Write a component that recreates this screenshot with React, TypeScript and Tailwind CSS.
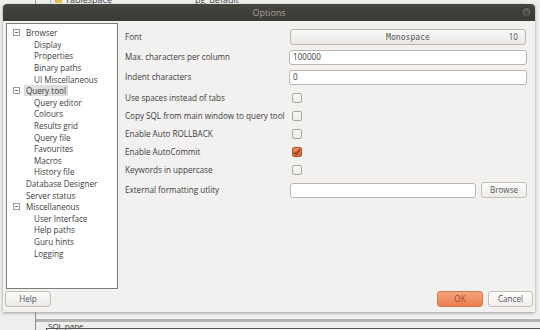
import React from "react";

// Tree data for the left panel
interface TreeItem {
  label: string;
  level: number;
  expanded?: boolean;
  selected?: boolean;
}

const treeItems: TreeItem[] = [
  { label: "Browser", level: 0, expanded: true },
  { label: "Display", level: 1 },
  { label: "Properties", level: 1 },
  { label: "Binary paths", level: 1 },
  { label: "UI Miscellaneous", level: 1 },
  { label: "Query tool", level: 0, expanded: true, selected: true },
  { label: "Query editor", level: 1 },
  { label: "Colours", level: 1 },
  { label: "Results grid", level: 1 },
  { label: "Query file", level: 1 },
  { label: "Favourites", level: 1 },
  { label: "Macros", level: 1 },
  { label: "History file", level: 1 },
  { label: "Database Designer", level: 0 },
  { label: "Server status", level: 0 },
  { label: "Miscellaneous", level: 0, expanded: true },
  { label: "User Interface", level: 1 },
  { label: "Help paths", level: 1 },
  { label: "Guru hints", level: 1 },
  { label: "Logging", level: 1 },
];

const checkRows: { label: string; checked: boolean }[] = [
  { label: "Use spaces instead of tabs", checked: false },
  { label: "Copy SQL from main window to query tool", checked: false },
  { label: "Enable Auto ROLLBACK", checked: false },
  { label: "Enable AutoCommit", checked: true },
  { label: "Keywords in uppercase", checked: false },
];

const Expander: React.FC = () => (
  <svg width="7" height="7" viewBox="0 0 7 7" className="block">
    <rect x="0.5" y="0.5" width="6" height="6" fill="none" stroke="#9a9a9a" />
    <line x1="2" y1="3.5" x2="5" y2="3.5" stroke="#6a6a6a" />
  </svg>
);

const CheckBox: React.FC<{ checked: boolean }> = ({ checked }) =>
  checked ? (
    <div className="w-[10px] h-[10px] rounded-[2px] border border-[#b5542a] bg-gradient-to-b from-[#ec8a5c] to-[#d3653a] flex items-center justify-center">
      <svg width="8" height="8" viewBox="0 0 8 8">
        <path d="M1.2 4.2 L3.2 6.2 L7 1.3" fill="none" stroke="#8c3614" strokeWidth="1.4" />
      </svg>
    </div>
  ) : (
    <div className="w-[10px] h-[10px] rounded-[2px] border border-[#aaa7a1] bg-gradient-to-b from-[#f7f7f6] to-[#ecebe9]" />
  );

const TreeRow: React.FC<{ item: TreeItem }> = ({ item }) => (
  <div className={`flex items-center h-[11.6px] ${item.level === 1 ? "pl-[14px]" : "pl-[6px]"}`}>
    <div className="w-[13px] flex items-center">{item.level === 0 && item.expanded && <Expander />}</div>
    <span
      className={`leading-[11px] whitespace-nowrap ${
        item.selected ? "bg-[#dfdedc] px-[2px] -mx-[2px]" : ""
      }`}
    >
      {item.label}
    </span>
  </div>
);

export default function App() {
  return (
    <div
      className="w-[540px] h-[330px] overflow-hidden bg-[#efefee] flex flex-col text-[#3c3c3c] text-[8.1px]"
      style={{ fontFamily: '"Open Sans", "Noto Sans", sans-serif' }}
    >
      {/* window behind, top strip */}
      <div className="h-[4px] shrink-0 relative overflow-hidden">
        <div className="absolute left-[35px] top-0 h-full w-[1px] bg-[#9b9b9b]" />
        <div className="absolute left-[50px] top-0 h-full w-[1px] bg-[#b5b5b5]" />
        <div className="absolute left-[55px] top-[-4px] w-[7px] h-[7px] bg-[#e0c24a] rounded-[1px]" />
        <div className="absolute left-[65px] top-[-7px] text-[9px] text-[#444]">Tablespace</div>
        <div className="absolute left-[195px] top-[-7px] text-[9px] text-[#444]">pg_default</div>
      </div>

      {/* dialog */}
      <div className="ml-[3px] w-[532px] h-[308px] shrink-0 flex flex-col bg-[#f2f1f0] shadow-[0_1px_3px_rgba(0,0,0,0.35)]">
        {/* title bar */}
        <div className="h-[17px] shrink-0 rounded-t-[4px] bg-gradient-to-b from-[#45443f] to-[#3a3935] flex items-center relative">
          <div className="flex-1 text-center text-[9px] text-[#a5a199]">Options</div>
          <div className="absolute right-[3px] top-[3px] w-[11px] h-[11px] rounded-full bg-gradient-to-b from-[#6a6964] to-[#4a4944] border border-[#33322e] flex items-center justify-center">
            <svg width="5" height="5" viewBox="0 0 5 5">
              <path d="M0.5 0.5 L4.5 4.5 M4.5 0.5 L0.5 4.5" stroke="#3a3935" strokeWidth="1" />
            </svg>
          </div>
        </div>

        {/* body */}
        <div className="flex-1 flex flex-col pt-[2px]">
          <div className="flex h-[266px]">
            {/* tree */}
            <div className="ml-[3px] w-[112px] h-full border border-[#7b7b7b] bg-white pt-[3px]">
              {treeItems.map((it) => (
                <TreeRow key={it.label} item={it} />
              ))}
            </div>

            {/* settings */}
            <div className="ml-[7px] w-[402px] pt-[4px] flex flex-col">
              <div className="flex items-center h-[20px]">
                <div className="w-[164px]">Font</div>
                <div className="w-[236px] h-[16px] ml-[1px] rounded-[3px] border border-[#bbb7af] bg-gradient-to-b from-[#f8f8f7] to-[#e9e8e6] flex items-center relative">
                  <div
                    className="flex-1 text-center text-[#555]"
                    style={{ fontFamily: '"DejaVu Sans Mono", "Liberation Mono", monospace' }}
                  >
                    Monospace
                  </div>
                  <div className="absolute right-[7px] text-[#555]">10</div>
                </div>
              </div>
              <div className="flex items-center h-[20px]">
                <div className="w-[164px]">Max. characters per column</div>
                <div className="w-[238px] h-[15px] rounded-[3px] border border-[#bbb7af] bg-white flex items-center px-[3px]">
                  100000
                </div>
              </div>
              <div className="flex items-center h-[21px]">
                <div className="w-[164px]">Indent characters</div>
                <div className="w-[238px] h-[15px] rounded-[3px] border border-[#bbb7af] bg-white flex items-center px-[3px]">
                  0
                </div>
              </div>
              <div className="h-[1px]" />
              {checkRows.map((r) => (
                <div key={r.label} className="flex items-center h-[18px]">
                  <div className="w-[167px] whitespace-nowrap">{r.label}</div>
                  <CheckBox checked={r.checked} />
                </div>
              ))}
              <div className="flex items-center h-[22px]">
                <div className="w-[165px]">External formatting utlity</div>
                <div className="w-[186px] h-[15px] rounded-[3px] border border-[#bbb7af] bg-white" />
                <div className="ml-[5px] w-[46px] h-[16px] rounded-[3px] border border-[#c4c0b8] bg-gradient-to-b from-[#fbfbfa] to-[#ebeae8] flex items-center justify-center text-[#555]">
                  Browse
                </div>
              </div>
            </div>
          </div>

          {/* buttons */}
          <div className="flex items-center mt-[2px] h-[16px]">
            <div className="ml-[2px] w-[46px] h-[16px] rounded-[3px] border border-[#c4c0b8] bg-gradient-to-b from-[#fbfbfa] to-[#ebeae8] flex items-center justify-center text-[#555]">
              Help
            </div>
            <div className="flex-1" />
            <div className="w-[46px] h-[16px] rounded-[3px] border border-[#d77a52] bg-gradient-to-b from-[#f6a37d] to-[#eb7d50] flex items-center justify-center text-[#a5482a]">
              OK
            </div>
            <div className="ml-[5px] mr-[2px] w-[45px] h-[16px] rounded-[3px] border border-[#c4c0b8] bg-gradient-to-b from-[#fdfdfc] to-[#efeeec] flex items-center justify-center text-[#555]">
              Cancel
            </div>
          </div>
        </div>
      </div>

      {/* window behind, bottom strip */}
      <div className="flex-1 relative">
        <div className="absolute left-[35px] top-0 bottom-0 w-[1px] bg-[#8d8d8d]" />
        <div className="absolute left-[36px] right-0 top-[7px] h-[3px] bg-[#b4b4b2]" />
        <div className="absolute left-[48px] top-[9px] text-[8px] text-[#333] leading-[9px]">SQL pane</div>
        <div className="absolute left-[46px] right-0 top-[16px] h-[1px] bg-[#555]" />
        <div className="absolute left-[46px] top-[16px] bottom-0 w-[1px] bg-[#555]" />
      </div>
    </div>
  );
}
